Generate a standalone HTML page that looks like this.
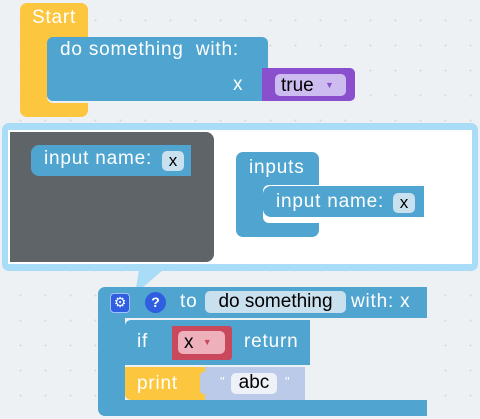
<!DOCTYPE html>
<html><head><style>
body{margin:0;width:480px;height:419px;overflow:hidden;background:#eef1f3;background-image:radial-gradient(circle,#d6d9dc 0.8px,transparent 1.2px);background-size:25px 25px;background-position:8px 8px;font-family:"Liberation Sans","DejaVu Sans",sans-serif;position:relative}
div{position:absolute;box-sizing:border-box}
.t{color:#fff;font-size:19px;white-space:nowrap;line-height:20px;letter-spacing:0.8px}
.b{background:#4fa5d0}
.f{background:#c9e0ee;border-radius:5px;color:#000;font-size:17px;text-align:center;line-height:20px}
</style></head><body>
<div style="left:20px;top:3px;width:68px;height:114px;background:#fcc73e;border-radius:7px"></div>
<div style="left:47px;top:38px;width:41px;height:65px;background:#eef1f3;border-radius:6px 0 0 6px"></div>
<div class="t" style="left:32px;top:8px">Start</div>
<div class="b" style="left:47px;top:37px;width:221px;height:64px;border-radius:6px"></div>
<div class="t" style="left:60px;top:40px">do something&nbsp; with:</div>
<div class="t" style="left:233px;top:75px">x</div>
<div style="left:262px;top:68px;width:93px;height:33px;background:#8a4fcc;border-radius:0 5px 5px 0"></div>
<div style="left:275px;top:74px;width:71px;height:22px;background:#cdbcf0;border-radius:5px;font-size:19px;line-height:22px;padding-left:6px;color:#000">true <span style="color:#8a4fcc;font-size:9px;margin-left:6px;vertical-align:3px">▼</span></div>
<div style="left:2px;top:123px;width:476px;height:148px;background:#a9dcf6;border-radius:7px"></div>
<div style="left:8px;top:130px;width:464px;height:134px;background:#fff"></div>
<div style="left:10px;top:132px;width:204px;height:130px;background:#5f6468;border-radius:0 8px 8px 0"></div>
<svg style="position:absolute;left:130px;top:262px" width="50" height="34"><polygon points="10,2 40,2 5,32" fill="#a9dcf6"/></svg>
<div class="b" style="left:31px;top:145px;width:160px;height:31px;border-radius:8px 0 0 8px"></div>
<div class="t" style="left:44px;top:149px">input name:</div>
<div class="f" style="left:162px;top:151px;width:22px;height:20px">x</div>
<div class="b" style="left:236px;top:152px;width:83px;height:85px;border-radius:7px"></div>
<div style="left:263px;top:185px;width:56px;height:38px;background:#fff;border-radius:6px 0 0 6px"></div>
<div class="t" style="left:249px;top:158px">inputs</div>
<div class="b" style="left:263px;top:186px;width:161px;height:31px;border-radius:8px 0 0 8px"></div>
<div class="t" style="left:276px;top:192px">input name:</div>
<div class="f" style="left:393px;top:193px;width:22px;height:20px">x</div>
<div class="b" style="left:98px;top:287px;width:329px;height:129px;border-radius:7px 0 0 7px"></div>
<div style="left:125px;top:318px;width:302px;height:82px;background:#eef1f3"></div>
<div style="left:110px;top:293px;width:20px;height:20px;background:#2f5ee0;border-radius:4px;border:1px solid #9fc0ff;color:#fff;font-size:14px;line-height:17px;text-align:center">⚙</div>
<div style="left:145px;top:292px;width:21px;height:21px;background:#2f5ee0;border-radius:50%;color:#fff;font-size:14px;font-weight:bold;line-height:21px;text-align:center">?</div>
<div class="t" style="left:180px;top:292px">to</div>
<div class="f" style="left:205px;top:291px;width:141px;height:22px;font-size:19px;line-height:22px">do something</div>
<div class="t" style="left:351px;top:292px">with: x</div>
<div class="b" style="left:125px;top:320px;width:185px;height:45px;border-radius:6px 0 0 0"></div>
<div class="t" style="left:137px;top:332px">if</div>
<div style="left:172px;top:326px;width:60px;height:34px;background:#c9485b;border-radius:0 3px 3px 0"></div>
<div style="left:178px;top:331px;width:47px;height:23px;background:#eeb0bb;border-radius:5px;font-size:19px;line-height:23px;padding-left:6px;color:#000">x <span style="color:#c9485b;font-size:9px;margin-left:4px;vertical-align:3px">▼</span></div>
<div class="t" style="left:244px;top:332px">return</div>
<div style="left:125px;top:367px;width:82px;height:33px;background:#fcc73e;border-radius:0 0 0 6px"></div>
<div class="t" style="left:137px;top:374px">print</div>
<div style="left:205px;top:367px;width:100px;height:33px;background:#bccae9"></div>
<div style="left:200px;top:372px;width:10px;height:22px;background:#bccae9;border-radius:4px 0 0 4px"></div>
<div class="t" style="left:220px;top:372px;font-size:13px">"</div>
<div class="f" style="left:231px;top:373px;width:46px;height:21px;background:#eef1f8;font-size:19px">abc</div>
<div class="t" style="left:285px;top:372px;font-size:13px">"</div>
</body></html>
